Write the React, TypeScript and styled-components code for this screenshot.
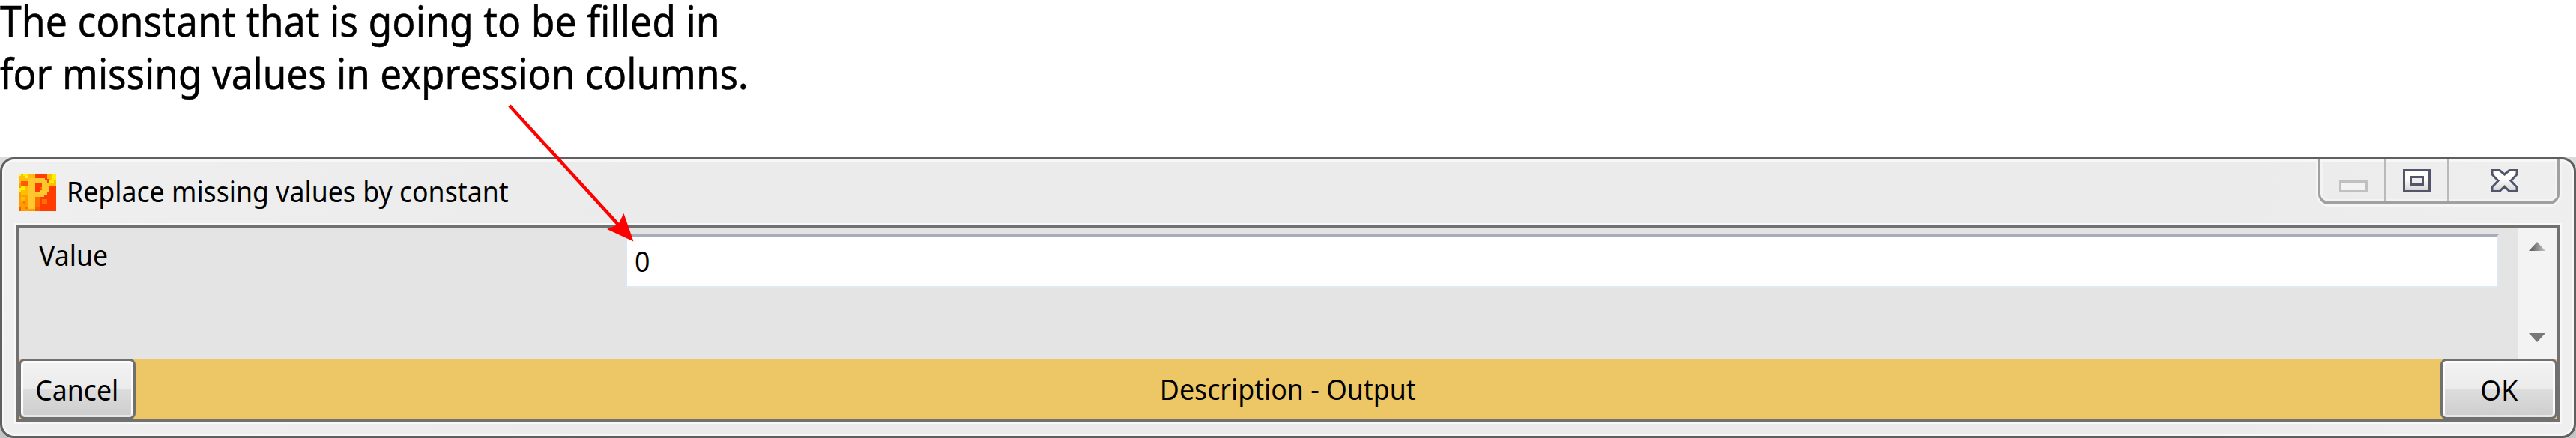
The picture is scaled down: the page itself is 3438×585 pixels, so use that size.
import React from "react";
import styled, { createGlobalStyle } from "styled-components";

const Global = createGlobalStyle`
  * { box-sizing: border-box; }
  body { margin: 0; background: #fff; color: #000; font-family: "Noto Sans", sans-serif; font-size: 39px; overflow: hidden; }
  button { font: inherit; color: inherit; padding: 0; }
`;

const Page = styled.main`
  position: relative;
  width: 3438px;
  height: 585px;
  display: flex;
  flex-direction: column;
`;

const Note = styled.header`
  height: 210px;
`;

const NoteLine = styled.div<{ $stretch: number }>`
  height: 70px;
  font-size: 56px;
  line-height: 55px;
  white-space: nowrap;
  width: max-content;
  -webkit-text-stroke: 0.5px #000;
  transform-origin: 0 0;
  transform: scaleX(${(p) => p.$stretch});
`;

const Backdrop = styled.div`
  height: 375px;
  background: linear-gradient(#dcdcdc, #c4c4c4);
`;

const Window = styled.section`
  height: 375px;
  border: 3px solid #5f5f5f;
  border-radius: 19px;
  box-shadow: inset 0 0 0 3px #f7f7f7;
  background: linear-gradient(100deg, #efefef 0, #ebebeb 26%, #ebebeb 85%, #efefef 100%);
  padding: 0 19px 19px;
  display: flex;
  flex-direction: column;
`;

const TitleBar = styled.div`
  height: 88px;
  flex: none;
  display: flex;
  align-items: flex-start;
  padding-left: 3px;
`;

const AppIcon = styled.svg`
  width: 50px;
  height: 50px;
  margin-top: 19px;
`;

const Title = styled.div`
  margin: 15px 0 0 14px;
  line-height: 53px;
  flex: 1;
  white-space: nowrap;
`;

const Fit = styled.span<{ $center?: boolean }>`
  display: inline-block;
  transform-origin: ${(p) => (p.$center ? "50%" : "0")} 50%;
  transform: scaleX(0.915);
`;

const Controls = styled.div`
  display: flex;
  width: 322px;
  height: 60px;
  border: 3px solid #a0a0a0;
  border-top: 0;
  border-bottom-width: 4px;
  border-radius: 0 0 14px 14px;
  box-shadow: 0 0 0 3px #f5f5f5, inset 0 3px 0 #f7f7f7, inset 0 0 0 3px #f3f3f3;
  clip-path: inset(0 -3px -3px -3px);
`;

const Control = styled.button<{ $w: number }>`
  width: ${(p) => p.$w}px;
  border: 0;
  border-right: 3px solid #b9b9b9;
  background: transparent;
  &:last-child { border-right: 0; flex: 1; }
  svg { display: block; }
`;

const Client = styled.div`
  flex: 1;
  border: 3px solid #717171;
  box-shadow: 0 0 0 3px #f8f8f8;
  display: flex;
  flex-direction: column;
`;

const Parameters = styled.div`
  height: 175px;
  display: flex;
  background: #e4e4e4;
`;

const Label = styled.label`
  width: 809px;
  padding: 9px 0 0 27px;
  line-height: 53px;
`;

const Field = styled.div`
  width: 2501px;
  height: 72px;
  margin-top: 9px;
  border: 3px solid #dfe6ef;
  border-top-color: #a5adb7;
  border-bottom-color: #e1e9ef;
  background: #fff;
  padding: 5px 0 0 10px;
  line-height: 53px;
`;

const ScrollBar = styled.div`
  width: 53px;
  margin-left: auto;
  background: #f3f3f3;
  display: flex;
  flex-direction: column;
  justify-content: space-between;
  align-items: center;
  padding: 19px 1px 22px 0;
`;

const Footer = styled.div`
  flex: 1;
  display: flex;
  justify-content: space-between;
  background: #edc765;
`;

const PushButton = styled.button`
  width: 156px;
  height: 81px;
  border: 3px solid #707070;
  border-radius: 8px;
  box-shadow: inset 0 -3px 0 #e6e6e6, inset 0 0 0 3px #fcfcfc;
  background: linear-gradient(#f3f3f3 0, #ebebeb 37px, #dddddd 37px, #cdcdcd 100%);
  line-height: 53px;
  white-space: nowrap;
`;

const Description = styled.div`
  line-height: 53px;
  padding-top: 13px;
  white-space: nowrap;
`;

const Pointer = styled.svg`
  position: absolute;
  left: 670px;
  top: 130px;
`;

const ScrollArrow = ({ down }: { down?: boolean }) => (
  <svg width="22" height="12" viewBox="0 0 22 12">
    <defs>
      <linearGradient id="arrow">
        <stop offset="0.2" stopColor="#686868" />
        <stop offset="1" stopColor="#c4c4c4" />
      </linearGradient>
    </defs>
    <path d={down ? "M0 0H22L11 12Z" : "M0 12L11 0L22 12Z"} fill={down ? "#777" : "url(#arrow)"} />
  </svg>
);

export default function App() {
  return (
    <>
      <Global />
      <Page>
        <Note>
          <NoteLine $stretch={0.924}>The constant that is going to be filled in</NoteLine>
          <NoteLine $stretch={0.914}>for missing values in expression columns.</NoteLine>
        </Note>
        <Backdrop>
          <Window>
            <TitleBar>
              <AppIcon viewBox="0 0 50 50">
                <path fill="#ff3d00" d="M0 0H50V50H0Z" />
                <path fill="#ff9d00" d="M0 0H22V50H0Z" />
                <path fill="#ffbe00" d="M0 0H22V7H13V12H0Z M3 16H13V28H3Z M38 0H50V16H41V7H38Z M3 31H9V37H3Z" />
                <path fill="#fff04a" d="M0 0H3V3H0Z M9 3H12V6H9Z" />
                <path fill="#ffee00" d="M6 0H12V3H6Z M44 0H50V9H44Z M41 9H47V13H41Z M3 16H9V22H3Z M0 19H3V25H0Z" />
                <path fill="#ff5a00" d="M3 10H12V16H3Z M0 44H3V50H0Z M22 44H28V50H22Z" />
                <path fill="#ff7000" d="M22 31H28V44H22Z M31 34H38V41H31Z M6 37H9V40H6Z M9 44H13V47H9Z M28 18H31V21H28Z" />
                <path fill="#ffc72e" fillRule="evenodd" d="M13 6H35V9H38V12H41V25H38V28H34V31H22V47H13Z M22 12V25H28V22H31V12Z" />
              </AppIcon>
              <Title><Fit>Replace missing values by constant</Fit></Title>
              <Controls>
                <Control $w={88} aria-label="Minimize">
                  <svg width="85" height="56"><rect x="26.5" y="29.500" width="35" height="13" fill="#f3f3f3" stroke="#c0c0c0" strokeWidth="3" /></svg>
                </Control>
                <Control $w={84} aria-label="Maximize">
                  <svg width="81" height="56">
                    <defs>
                      <linearGradient id="metal" x2="0" y2="1">
                        <stop offset="0.4" stopColor="#fff" />
                        <stop offset="1" stopColor="#d3d3d3" />
                      </linearGradient>
                    </defs>
                    <rect x="23.5" y="14.500" width="34" height="28" fill="url(#metal)" stroke="#53566b" strokeWidth="3" />
                    <rect x="32.5" y="23.500" width="16" height="10" fill="#eee" stroke="#53566b" strokeWidth="3" />
                  </svg>
                </Control>
                <Control $w={144} aria-label="Close">
                  <svg width="144" height="56">
                    <path d="M57 14.500H67L73.500 20L80 14.500H90V20L82 28.500L90 37V42.500H80L73.500 36L67 42.500H57V37L65 28.500L57 20Z" fill="url(#metal)" stroke="#53566b" strokeWidth="3" />
                  </svg>
                </Control>
              </Controls>
            </TitleBar>
            <Client>
              <Parameters>
                <Label><Fit>Value</Fit></Label>
                <Field><Fit>0</Fit></Field>
                <ScrollBar><ScrollArrow /><ScrollArrow down /></ScrollBar>
              </Parameters>
              <Footer>
                <PushButton><Fit $center>Cancel</Fit></PushButton>
                <Description><Fit $center>Description - Output</Fit></Description>
                <PushButton><Fit $center>OK</Fit></PushButton>
              </Footer>
            </Client>
          </Window>
        </Backdrop>
        <Pointer width="180" height="200" viewBox="670 130 180 200">
          <path d="M680 141L827 302" stroke="#f00" strokeWidth="4.5" />
          <path d="M832.500 285L845.500 322.500L810 306L825 300Z" fill="#f00" />
        </Pointer>
      </Page>
    </>
  );
}
